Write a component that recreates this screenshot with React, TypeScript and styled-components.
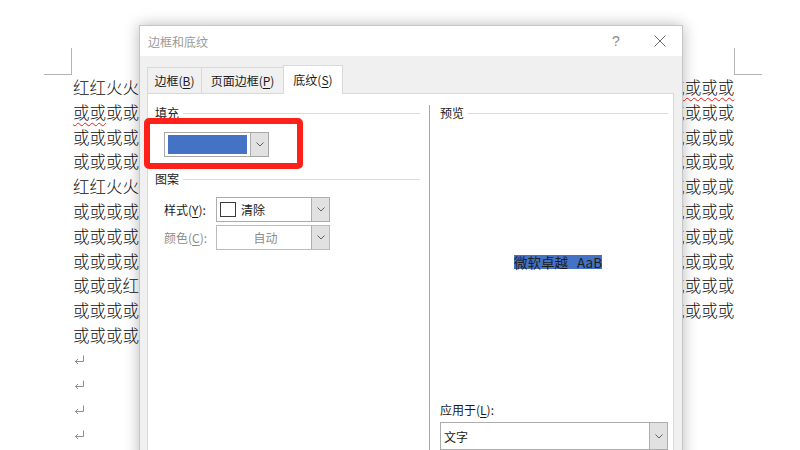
import React from "react";
import styled, { createGlobalStyle, css } from "styled-components";

const GlobalStyle = createGlobalStyle`
  html, body {
    margin: 0;
    padding: 0;
    background: #ffffff;
  }
  body {
    font-family: "Noto Sans CJK SC", "Noto Sans", sans-serif;
  }
`;

const FILL = "或".repeat(40);

const docLines: { text: string; squiggleStart?: number; squiggleEnd?: number }[] = [
  { text: "红红火火" + "或".repeat(36), squiggleStart: 33, squiggleEnd: 40 },
  { text: FILL, squiggleStart: 0, squiggleEnd: 2 },
  { text: FILL },
  { text: FILL },
  { text: "红红火火" + "或".repeat(36) },
  { text: FILL },
  { text: FILL },
  { text: FILL },
  { text: "或或或红" + "或".repeat(36) },
  { text: FILL },
  { text: "或".repeat(12) },
];

function Chevron() {
  return (
    <svg width="8" height="5" viewBox="0 0 8 5">
      <path d="M0.5 0.5 L4 4 L7.5 0.5" fill="none" stroke="#606060" strokeWidth="1" />
    </svg>
  );
}

function ReturnArrow() {
  return (
    <svg width="11" height="10" viewBox="0 0 11 10">
      <path
        d="M9.5 0.5 V6.5 H1.5 M4 4 L1.5 6.5 L4 9"
        fill="none"
        stroke="#8e8e8e"
        strokeWidth="1"
      />
    </svg>
  );
}

function DocLine({ text, squiggleStart, squiggleEnd }: (typeof docLines)[number]) {
  if (squiggleStart === undefined || squiggleEnd === undefined) return <Line>{text}</Line>;
  return (
    <Line>
      {text.slice(0, squiggleStart)}
      <Squiggle>{text.slice(squiggleStart, squiggleEnd)}</Squiggle>
      {text.slice(squiggleEnd)}
    </Line>
  );
}

function App() {
  return (
    <Page>
      <GlobalStyle />
      <Doc>
        <MarkRow>
          <Mark $side="left" />
          <Mark $side="right" />
        </MarkRow>
        <TextBlock>
          {docLines.map((l, i) => (
            <DocLine key={i} {...l} />
          ))}
          {[0, 1, 2, 3].map((i) => (
            <ReturnLine key={"r" + i}>
              <ReturnArrow />
            </ReturnLine>
          ))}
        </TextBlock>
      </Doc>

      <Dialog>
        <TitleBar>
          <TitleText>边框和底纹</TitleText>
          <TitleButton>?</TitleButton>
          <TitleButton>
            <svg width="12" height="12" viewBox="0 0 12 12">
              <path d="M0.5 0.5 L11.5 11.5 M11.5 0.5 L0.5 11.5" stroke="#6a6a6a" strokeWidth="1" />
            </svg>
          </TitleButton>
        </TitleBar>
        <Body>
          <TabRow>
            <Tab $w={55}>
              边框(<U>B</U>)
            </Tab>
            <Tab $w={83}>
              页面边框(<U>P</U>)
            </Tab>
            <Tab $w={60} $active>
              底纹(<U>S</U>)
            </Tab>
          </TabRow>
          <Panel>
            <LeftCol>
              <GroupHeading>填充</GroupHeading>
              <RedFrame>
                <ColorCombo>
                  <Swatch />
                  <DropButton>
                    <Chevron />
                  </DropButton>
                </ColorCombo>
              </RedFrame>
              <GroupHeading $top={2}>图案</GroupHeading>
              <FormRows>
                <FieldRow>
                  <FieldLabel>
                    样式(<U>Y</U>):
                  </FieldLabel>
                  <Select>
                    <SelectValue>
                      <PatternBox />
                      清除
                    </SelectValue>
                    <DropButton>
                      <Chevron />
                    </DropButton>
                  </Select>
                </FieldRow>
                <FieldRow>
                  <FieldLabel $disabled>
                    颜色(<U>C</U>):
                  </FieldLabel>
                  <Select $disabled>
                    <SelectValue $center $disabled>
                      自动
                    </SelectValue>
                    <DropButton>
                      <Chevron />
                    </DropButton>
                  </Select>
                </FieldRow>
              </FormRows>
            </LeftCol>
            <RightCol>
              <GroupHeading>预览</GroupHeading>
              <PreviewBox>
                <PreviewSample>微软卓越&nbsp;&nbsp;&nbsp;AaB</PreviewSample>
              </PreviewBox>
              <ApplyLabel>
                应用于(<U>L</U>):
              </ApplyLabel>
              <ApplyCombo>
                <SelectValue>文字</SelectValue>
                <DropButton>
                  <Chevron />
                </DropButton>
              </ApplyCombo>
            </RightCol>
          </Panel>
        </Body>
      </Dialog>
    </Page>
  );
}

export default App;

const Page = styled.div`
  position: relative;
  width: 800px;
  height: 450px;
  overflow: hidden;
  background: #ffffff;
`;

const Doc = styled.div`
  padding: 48px 38px 0 44px;
`;

const MarkRow = styled.div`
  display: flex;
  justify-content: space-between;
  height: 27px;
`;

const Mark = styled.div<{ $side: "left" | "right" }>`
  box-sizing: border-box;
  width: 28px;
  height: 27px;
  border-bottom: 1px solid #b4b4b4;
  ${({ $side }) =>
    $side === "left"
      ? css`
          border-right: 1px solid #b4b4b4;
        `
      : css`
          border-left: 1px solid #b4b4b4;
        `}
`;

const TextBlock = styled.div`
  margin: 0 27px 0 29px;
  font-family: "Noto Sans CJK SC", sans-serif;
  font-size: 16.55px;
  font-weight: 300;
  line-height: 24.8px;
  color: #0e0e0e;
  white-space: nowrap;
  overflow: hidden;
`;

const Line = styled.div`
  height: 24.8px;
`;

const ReturnLine = styled(Line)`
  display: flex;
  align-items: center;
  padding-left: 1px;
`;

const Squiggle = styled.span`
  text-decoration: underline wavy #e81c1c;
  text-decoration-thickness: 1px;
  text-underline-offset: 3px;
`;

const Dialog = styled.div`
  position: absolute;
  left: 139px;
  top: 25px;
  width: 544px;
  height: 440px;
  box-sizing: border-box;
  display: flex;
  flex-direction: column;
  background: #f0f0f0;
  border: 1px solid #c6c6c6;
  box-shadow: 0 0 14px rgba(0, 0, 0, 0.28);
`;

const TitleBar = styled.div`
  display: flex;
  align-items: center;
  height: 30px;
  padding-left: 8px;
  background: #ffffff;
  font-size: 12px;
  color: #9a9a9a;
`;

const TitleText = styled.div`
  flex: 1;
`;

const TitleButton = styled.div`
  display: flex;
  align-items: center;
  justify-content: center;
  width: 44px;
  height: 30px;
  font-family: "Liberation Sans", sans-serif;
  font-size: 14px;
  color: #8a8a8a;
`;

const Body = styled.div`
  flex: 1;
  display: flex;
  flex-direction: column;
  padding: 9px 8px 0 7px;
  font-size: 12px;
  color: #1a1a1a;
`;

const TabRow = styled.div`
  display: flex;
  align-items: flex-end;
  height: 28px;
`;

const Tab = styled.div<{ $w: number; $active?: boolean }>`
  box-sizing: border-box;
  display: flex;
  align-items: center;
  justify-content: center;
  width: ${({ $w }) => $w}px;
  height: 26px;
  margin-right: -1px;
  border: 1px solid #d9d9d9;
  border-bottom: none;
  background: #f0f0f0;
  ${({ $active }) =>
    $active &&
    css`
      position: relative;
      z-index: 1;
      height: 29px;
      margin-bottom: -1px;
      padding-bottom: 2px;
      background: #ffffff;
    `}
`;

const U = styled.span`
  text-decoration: underline;
  text-underline-offset: 2px;
`;

const Panel = styled.div`
  flex: 1;
  display: grid;
  grid-template-columns: 281px 1fr;
  background: #ffffff;
  border: 1px solid #d9d9d9;
`;

const LeftCol = styled.div`
  display: flex;
  flex-direction: column;
  padding: 11px 9px 0 7px;
`;

const RightCol = styled.div`
  display: flex;
  flex-direction: column;
  margin-top: 11px;
  padding: 0 5px 0 10px;
  border-left: 1px solid #a8a8a8;
`;

const GroupHeading = styled.div<{ $top?: number }>`
  display: flex;
  align-items: center;
  gap: 4px;
  height: 16px;
  margin-top: ${({ $top }) => $top ?? 0}px;
  line-height: 16px;

  &::after {
    content: "";
    flex: 1;
    height: 1px;
    background: #dcdcdc;
  }
`;

const RedFrame = styled.div`
  box-sizing: border-box;
  width: 159px;
  height: 51px;
  margin: -3px 0 0 -11px;
  padding: 8px 0 0 14px;
  border: 6px solid #fe2019;
  border-radius: 5px;
`;

const ColorCombo = styled.div`
  box-sizing: border-box;
  display: flex;
  width: 105px;
  height: 25px;
  border: 1px solid #a8a8a8;
  background: #ffffff;
`;

const Swatch = styled.div`
  flex: 1;
  margin: 2px 3px;
  background: #4472c4;
`;

const DropButton = styled.div`
  display: flex;
  align-items: center;
  justify-content: center;
  width: 17px;
  background: #e1e1e1;
  border-left: 1px solid #adadad;
`;

const FormRows = styled.div`
  display: flex;
  flex-direction: column;
  gap: 3px;
  margin-top: 10px;
  padding-left: 9px;
`;

const FieldRow = styled.div`
  display: flex;
  align-items: center;
  height: 25px;
`;

const FieldLabel = styled.div<{ $disabled?: boolean }>`
  width: 52px;
  color: ${({ $disabled }) => ($disabled ? "#8c8c8c" : "#1a1a1a")};
`;

const Select = styled.div<{ $disabled?: boolean }>`
  box-sizing: border-box;
  display: flex;
  width: 114px;
  height: 25px;
  border: 1px solid ${({ $disabled }) => ($disabled ? "#bcbcbc" : "#adadad")};
  background: #ffffff;
`;

const SelectValue = styled.div<{ $center?: boolean; $disabled?: boolean }>`
  flex: 1;
  display: flex;
  align-items: center;
  justify-content: ${({ $center }) => ($center ? "center" : "flex-start")};
  gap: 5px;
  padding-left: 3px;
  color: ${({ $disabled }) => ($disabled ? "#8c8c8c" : "#1a1a1a")};
`;

const PatternBox = styled.div`
  box-sizing: border-box;
  width: 16px;
  height: 15px;
  border: 1px solid #3a3a3a;
  background: #ffffff;
`;

const PreviewBox = styled.div`
  display: flex;
  align-items: center;
  justify-content: center;
  height: 281px;
  padding-left: 8px;
`;

const PreviewSample = styled.span`
  font-size: 13.5px;
  line-height: 14px;
  color: #1e1e1e;
  background: #4472c4;
  white-space: nowrap;
`;

const ApplyLabel = styled.div`
  line-height: 16px;
`;

const ApplyCombo = styled.div`
  box-sizing: border-box;
  display: flex;
  height: 28px;
  margin-top: 4px;
  border: 1px solid #adadad;
  background: #ffffff;
`;
